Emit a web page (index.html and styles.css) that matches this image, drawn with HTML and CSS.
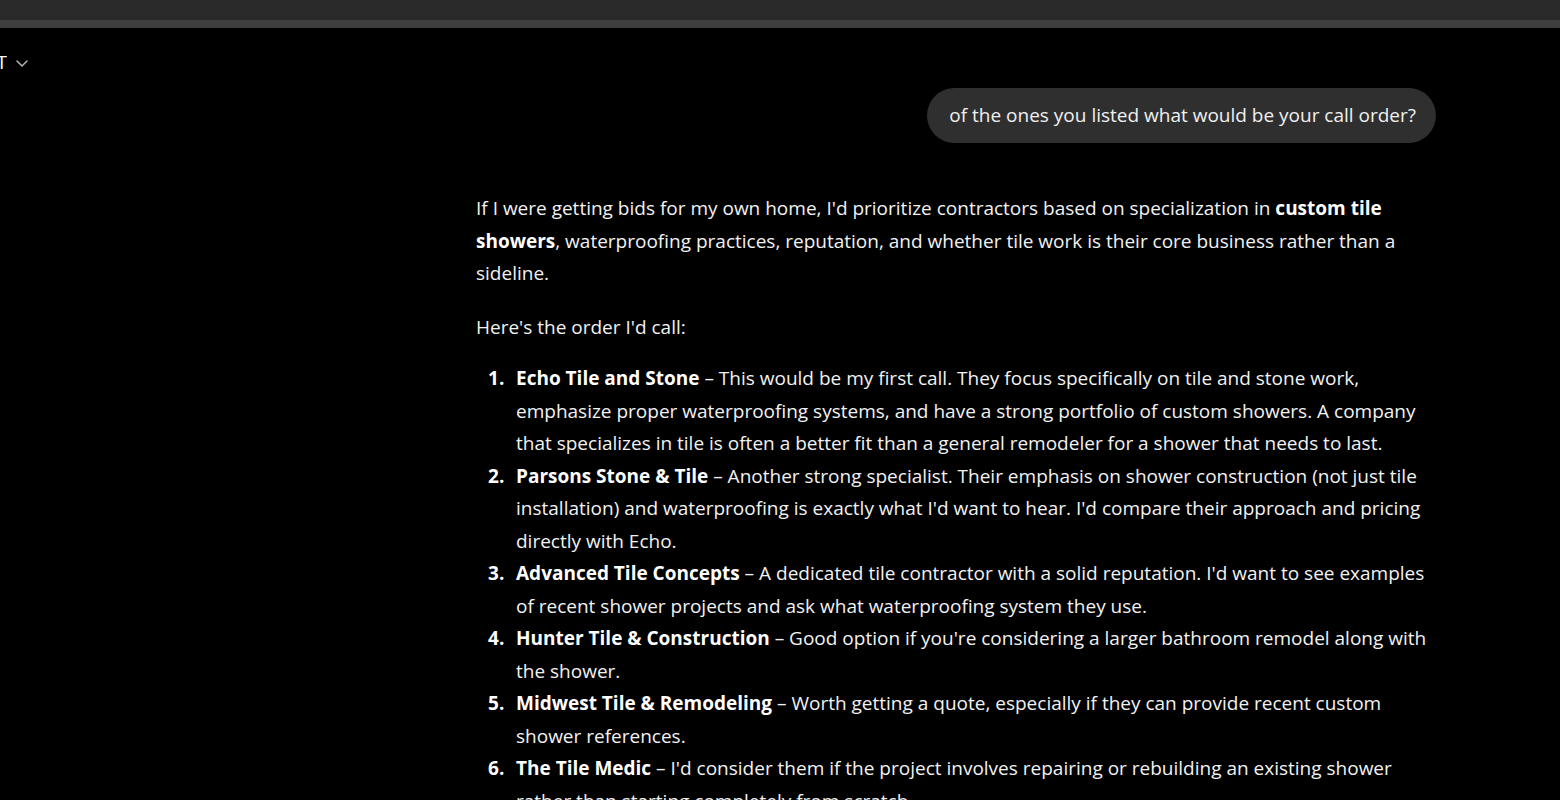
FILE: index.html
```html
<!DOCTYPE html>
<html lang="en">
<head>
    <meta charset="UTF-8">
    <meta name="viewport" content="width=device-width, initial-scale=1.0">
    <title>ChatGPT</title>
    <link rel="stylesheet" href="styles.css">
</head>
<body>
    <div class="titlebar"></div>

    <div class="header">
        <div class="model-name">ChatGPT</div>
        <svg class="chevron" width="14" height="14" viewBox="0 0 14 14">
            <path d="M2 5 L7 10 L12 5" fill="none" stroke="#b4b4b4" stroke-width="1.5" stroke-linecap="round" stroke-linejoin="round"/>
        </svg>
    </div>

    <div class="thread">
        <div class="user-row">
            <div class="bubble">of the ones you listed what would be your call order?</div>
        </div>

        <div class="answer">
            <p>If I were getting bids for my own home, I'd prioritize contractors based on specialization in <strong>custom tile showers</strong>, waterproofing practices, reputation, and whether tile work is their core business rather than a sideline.</p>

            <p>Here's the order I'd call:</p>

            <ol>
                <li><strong>Echo Tile and Stone</strong> – This would be my first call. They focus specifically on tile and stone work, emphasize proper waterproofing systems, and have a strong portfolio of custom showers. A company that specializes in tile is often a better fit than a general remodeler for a shower that needs to last.</li>
                <li><strong>Parsons Stone &amp; Tile</strong> – Another strong specialist. Their emphasis on shower construction (not just tile installation) and waterproofing is exactly what I'd want to hear. I'd compare their approach and pricing directly with Echo.</li>
                <li><strong>Advanced Tile Concepts</strong> – A dedicated tile contractor with a solid reputation. I'd want to see examples of recent shower projects and ask what waterproofing system they use.</li>
                <li><strong>Hunter Tile &amp; Construction</strong> – Good option if you're considering a larger bathroom remodel along with the shower.</li>
                <li><strong>Midwest Tile &amp; Remodeling</strong> – Worth getting a quote, especially if they can provide recent custom shower references.</li>
                <li><strong>The Tile Medic</strong> – I'd consider them if the project involves repairing or rebuilding an existing shower rather than starting completely from scratch.</li>
            </ol>
        </div>
    </div>
</body>
</html>
```

FILE: styles.css
```css
html, body {
    margin: 0;
    height: 100%;
    overflow: hidden;
}

body {
    background: #000;
    color: #ececec;
    font-family: 'Open Sans', 'Noto Sans', sans-serif;
    font-size: 19px;
}

.titlebar {
    height: 20px;
    background: #2a2a2a;
    border-bottom: 8px solid #3f3f3f;
}

.header {
    display: flex;
    align-items: center;
    box-sizing: border-box;
    height: 60px;
    padding-top: 8px;
}

.model-name {
    width: 7px;
    overflow: hidden;
    display: flex;
    justify-content: flex-end;
    font-size: 19px;
    color: #fff;
    white-space: nowrap;
}

.chevron {
    margin-left: 8px;
    margin-top: 2px;
}

.thread {
    width: 960px;
    margin-left: 476px;
}

.user-row {
    display: flex;
    justify-content: flex-end;
}

.bubble {
    background: #2f2f2f;
    border-radius: 28px;
    height: 55px;
    line-height: 55px;
    padding: 0 20px 0 22px;
    color: #f0f0f0;
}

.answer {
    margin-top: 49px;
    line-height: 32.5px;
    color: #f2f2f2;
}

.answer p {
    margin: 0 0 21px;
}

.answer strong {
    font-weight: 700;
    color: #fff;
}

.answer ol {
    margin: -2px 0 0;
    padding-left: 40px;
    list-style: none;
    counter-reset: item;
}

.answer li {
    counter-increment: item;
}

.answer li::before {
    content: counter(item) ".";
    display: inline-block;
    width: 28px;
    margin-left: -28px;
    font-weight: 700;
    color: #fff;
}
```
